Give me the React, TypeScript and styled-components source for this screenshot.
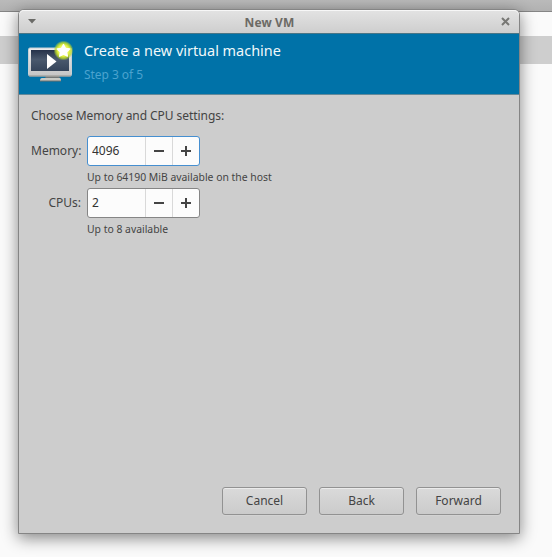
import React from "react";
import styled, { createGlobalStyle } from "styled-components";

const GlobalStyle = createGlobalStyle`
  *, *::before, *::after { box-sizing: border-box; }
  body { margin: 0; background: #fafafa; font-family: "Noto Sans", sans-serif; color: #444; }
`;

const Desktop = styled.main`
  position: relative;
  width: 552px;
  height: 557px;
  overflow: hidden;
  background: #fafafa;
`;

const Toolbar = styled.div`
  height: 12px;
  background: linear-gradient(#bababa, #b1b1b1);
  border-bottom: 1px solid #858585;
`;

const SelectedRow = styled.div`
  height: 28px;
  margin-top: 24px;
  background: #cecece;
`;

const Dialog = styled.section`
  position: absolute;
  left: 18px;
  top: 9px;
  width: 502px;
  height: 525px;
  display: flex;
  flex-direction: column;
  border: 1px solid #858585;
  border-radius: 6px 6px 0 0;
  background: #cdcdcd;
  box-shadow: 0 4px 16px 0 rgba(0, 0, 0, 0.48);
`;

const TitleBar = styled.header`
  height: 23px;
  flex: none;
  display: grid;
  grid-template-columns: 26px 1fr 28px;
  align-items: center;
  justify-items: center;
  border-radius: 5px 5px 0 0;
  background: linear-gradient(#e3e3e3, #cecece);
  box-shadow: inset 0 1px #f7f7f7;
`;

const Title = styled.h1`
  margin: 0;
  padding: 2px 0 0 3px;
  font-size: 12px;
  line-height: 17px;
  font-weight: 700;
  letter-spacing: 0.1px;
  color: #6c6a65;
`;

const Banner = styled.div`
  height: 62px;
  flex: none;
  display: flex;
  border-top: 1px solid #497687;
  border-bottom: 1px solid #63899a;
  background: #0072a8;
`;

const MachineIcon = styled.svg`
  width: 48px;
  height: 44px;
  margin: 6px 0 0 8px;
`;

const BannerText = styled.div`
  padding: 7px 0 0 9px;
`;

const Heading = styled.h2`
  margin: 0;
  font-size: 14.45px;
  line-height: 20px;
  font-weight: 400;
  color: #f1f8fa;
  white-space: nowrap;
`;

const Step = styled.p`
  margin: 5px 0 0;
  font-size: 12px;
  line-height: 18px;
  letter-spacing: -0.05px;
  color: #4ba3cf;
`;

const Content = styled.div`
  flex: 1;
  padding: 12px 0 0 12px;
`;

const Prompt = styled.p`
  margin: 0;
  font-size: 12px;
  line-height: 18px;
  letter-spacing: -0.06px;
`;

const Form = styled.div`
  display: grid;
  grid-template-columns: 50px 1fr;
  column-gap: 6px;
  margin-top: 11px;
`;

const Label = styled.label`
  font-size: 12px;
  line-height: 30px;
  text-align: right;
  white-space: nowrap;
`;

const Spinner = styled.div<{ $focused?: boolean }>`
  display: grid;
  grid-template-columns: 57px 27px 27px;
  width: 113px;
  height: 30px;
  border: 1px solid ${(p) => (p.$focused ? "#468fd0" : "#858585")};
  border-radius: 3px;
  background: #fcfcfc;
  overflow: hidden;
`;

const SpinInput = styled.input`
  min-width: 0;
  width: 57px;
  padding: 0 4px 2px;
  border: 0;
  outline: 0;
  background: transparent;
  color: #333;
  font: 12px "Noto Sans", sans-serif;
`;

const SpinButton = styled.button`
  display: flex;
  align-items: center;
  justify-content: center;
  padding: 0;
  border: 0;
  border-left: 1px solid #d9d9d9;
  background: transparent;
`;

const Hint = styled.p`
  grid-column: 2;
  height: 22px;
  margin: 0;
  padding-top: 3px;
  font-size: 10.4px;
  line-height: 17px;
`;

const Actions = styled.footer`
  display: flex;
  justify-content: flex-end;
  gap: 12px;
  padding: 0 18px 18px 0;
`;

const ActionButton = styled.button`
  width: 85px;
  height: 28px;
  padding: 0 0 2px;
  border: 1px solid #929292;
  border-radius: 3px;
  background: linear-gradient(#dadada, #cbcbcb);
  box-shadow: inset 0 1px #ebebeb, 0 1px #d3d3d3;
  color: #444;
  font: 12px "Noto Sans", sans-serif;
`;

function VirtualMachine() {
  return (
    <MachineIcon viewBox="0 0 48 44">
      <defs>
        <linearGradient id="screen" x2="0" y2="1">
          <stop stopColor="#253249" />
          <stop offset=".45" stopColor="#4a596d" />
          <stop offset="1" stopColor="#35445a" />
        </linearGradient>
        <linearGradient id="bezel" x2="0" y2="1">
          <stop stopColor="#eee" />
          <stop offset="1" stopColor="#c4c4c5" />
        </linearGradient>
        <radialGradient id="glow">
          <stop offset=".3" stopColor="#fbff9a" />
          <stop offset=".6" stopColor="#dcee3c" />
          <stop offset=".8" stopColor="#bcda2c" stopOpacity=".75" />
          <stop offset="1" stopColor="#a0c944" stopOpacity="0" />
        </radialGradient>
      </defs>
      <path d="M19 35h13l1 4H18z" fill="#747878" />
      <path d="M15 38h18q1 0 1 3H13q0-3 2-3z" fill="#c9cac5" />
      <path d="M13 41h21" stroke="#716f68" />
      <rect x="1.5" y="8" width="43" height="28" rx="1.5" fill="url(#bezel)" stroke="#c8d0d5" />
      <path d="M2 36h42" stroke="#938e86" />
      <rect x="4" y="10" width="38" height="21" fill="url(#screen)" />
      <path d="M20 14v15l9.5-7.5z" fill="#fff" />
      <circle cx="36.5" cy="10.5" r="10" fill="url(#glow)" />
      <path d="M36.5 4.5l1.9 3.9 4.3.6-3.1 3 .8 4.2-3.9-2.1-3.9 2.1.8-4.2-3.1-3 4.3-.6z" fill="#fff" stroke="#fff" strokeWidth="1.3" strokeLinejoin="round" />
    </MachineIcon>
  );
}

function NumberField({ id, value, focused }: { id: string; value: string; focused?: boolean }) {
  return (
    <Spinner $focused={focused}>
      <SpinInput id={id} defaultValue={value} />
      <SpinButton aria-label="Decrease">
        <svg width="12" height="12"><path d="M1 6h10" stroke="#444" strokeWidth="2" /></svg>
      </SpinButton>
      <SpinButton aria-label="Increase">
        <svg width="12" height="12"><path d="M1 6h10M6 1v10" stroke="#444" strokeWidth="2" /></svg>
      </SpinButton>
    </Spinner>
  );
}

export default function App() {
  return (
    <>
      <GlobalStyle />
      <Desktop>
        <Toolbar />
        <SelectedRow />
        <Dialog>
          <TitleBar>
            <svg width="8" height="5"><path d="M0 0h8L4 4.5z" fill="#6a6a67" /></svg>
            <Title>New VM</Title>
            <svg width="9" height="9"><path d="M1 1l7 7M8 1L1 8" stroke="#777774" strokeWidth="2" /></svg>
          </TitleBar>
          <Banner>
            <VirtualMachine />
            <BannerText>
              <Heading>Create a new virtual machine</Heading>
              <Step>Step 3 of 5</Step>
            </BannerText>
          </Banner>
          <Content>
            <Prompt>Choose Memory and CPU settings:</Prompt>
            <Form>
              <Label htmlFor="memory">Memory:</Label>
              <NumberField id="memory" value="4096" focused />
              <Hint>Up to 64190 MiB available on the host</Hint>
              <Label htmlFor="cpus">CPUs:</Label>
              <NumberField id="cpus" value="2" />
              <Hint>Up to 8 available</Hint>
            </Form>
          </Content>
          <Actions>
            <ActionButton>Cancel</ActionButton>
            <ActionButton>Back</ActionButton>
            <ActionButton>Forward</ActionButton>
          </Actions>
        </Dialog>
      </Desktop>
    </>
  );
}
